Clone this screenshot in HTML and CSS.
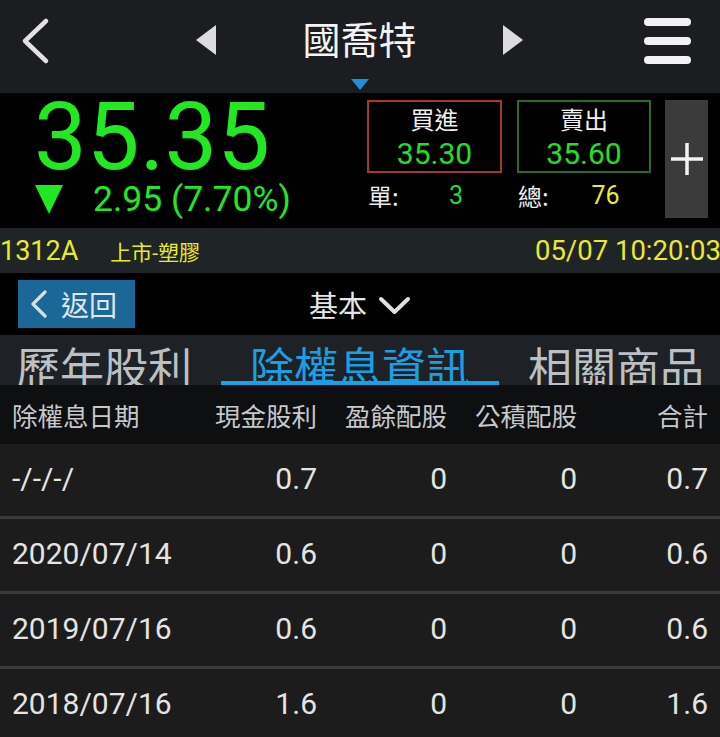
FILE: index.html
```html
<!DOCTYPE html>
<html lang="zh-Hant">
<head>
<meta charset="utf-8">
<title>國喬特</title>
<link rel="stylesheet" href="styles.css">
</head>
<body>
<div class="app">
  <header class="topbar">
    <div class="topnav">
      <div class="nav-left">
        <svg class="back-icon" width="32" height="48" viewBox="0 0 32 48"><polyline points="26,4 5,24 26,44" fill="none" stroke="#e2e2e2" stroke-width="4.5" stroke-linecap="round" stroke-linejoin="round"/></svg>
      </div>
      <div class="nav-mid">
        <svg class="tri" width="20" height="30" viewBox="0 0 20 30"><polygon points="20,0 0,15 20,30" fill="#dcdcdc"/></svg>
        <div class="title">國喬特</div>
        <svg class="tri" width="20" height="30" viewBox="0 0 20 30"><polygon points="0,0 20,15 0,30" fill="#dcdcdc"/></svg>
      </div>
      <div class="nav-right">
        <div class="burger"><span></span><span></span><span></span></div>
      </div>
    </div>
    <div class="caret-row">
      <svg width="18" height="11" viewBox="0 0 18 11"><polygon points="0,0 18,0 9,11" fill="#1e90d8"/></svg>
    </div>
  </header>

  <section class="quote">
    <div class="price-col">
      <div class="price">35.35</div>
      <div class="change">
        <svg class="down" width="28" height="29" viewBox="0 0 28 29"><polygon points="0,0 28,0 14,29" fill="#22e822"/></svg>
        <span class="change-text">2.95 (7.70%)</span>
      </div>
    </div>
    <div class="trade">
      <div class="box buy">
        <div class="box-label">買進</div>
        <div class="box-value">35.30</div>
      </div>
      <div class="box sell">
        <div class="box-label">賣出</div>
        <div class="box-value">35.60</div>
      </div>
      <div class="stat">
        <span class="stat-label">單:</span>
        <span class="stat-value green">3</span>
      </div>
      <div class="stat">
        <span class="stat-label">總:</span>
        <span class="stat-value yellow">76</span>
      </div>
    </div>
    <div class="plus">
      <svg width="32" height="32" viewBox="0 0 32 32"><path d="M16 0V32M0 16H32" stroke="#f2f2f2" stroke-width="3.5"/></svg>
    </div>
  </section>

  <div class="infobar">
    <span class="code">1312A</span>
    <span class="market">上市-塑膠</span>
    <span class="time">05/07 10:20:03</span>
  </div>

  <div class="subnav">
    <div class="sub-left">
      <div class="back-btn">
        <svg width="17" height="28" viewBox="0 0 17 28"><polyline points="15,2 3,14 15,26" fill="none" stroke="#d8dde2" stroke-width="3.2" stroke-linecap="round" stroke-linejoin="round"/></svg>
        <span>返回</span>
      </div>
    </div>
    <div class="dropdown">
      <span>基本</span>
      <svg width="33" height="19" viewBox="0 0 33 19"><polyline points="3,3 16.5,16 30,3" fill="none" stroke="#e0e0e0" stroke-width="4" stroke-linecap="round" stroke-linejoin="round"/></svg>
    </div>
    <div class="sub-right"></div>
  </div>

  <nav class="tabs">
    <div class="tab">歷年股利</div>
    <div class="tab active">除權息資訊</div>
    <div class="tab">相關商品</div>
  </nav>

  <div class="table">
    <div class="row head">
      <div class="c1">除權息日期</div>
      <div>現金股利</div>
      <div>盈餘配股</div>
      <div>公積配股</div>
      <div>合計</div>
    </div>
    <div class="row data">
      <div class="c1">-/-/-/</div>
      <div>0.7</div>
      <div>0</div>
      <div>0</div>
      <div>0.7</div>
    </div>
    <div class="row data">
      <div class="c1">2020/07/14</div>
      <div>0.6</div>
      <div>0</div>
      <div>0</div>
      <div>0.6</div>
    </div>
    <div class="row data">
      <div class="c1">2019/07/16</div>
      <div>0.6</div>
      <div>0</div>
      <div>0</div>
      <div>0.6</div>
    </div>
    <div class="row data">
      <div class="c1">2018/07/16</div>
      <div>1.6</div>
      <div>0</div>
      <div>0</div>
      <div>1.6</div>
    </div>
  </div>
</div>
</body>
</html>
```

FILE: styles.css
```css
* { box-sizing: border-box; }
html, body {
  margin: 0;
  padding: 0;
  background: #000;
}
body {
  font-family: Roboto, "Noto Sans CJK TC", sans-serif;
  color: #e6e6e6;
}
.app {
  width: 720px;
  height: 737px;
  overflow: hidden;
  background: #000;
}

/* top bar */
.topbar {
  height: 93px;
  background: #1b1d20;
  display: flex;
  flex-direction: column;
}
.topnav {
  height: 79px;
  padding: 0 21px 0 20px;
  display: grid;
  grid-template-columns: 1fr auto 1fr;
  align-items: center;
}
.nav-left { display: flex; align-items: center; }
.back-icon { display: block; margin-top: 2px; }
.nav-mid {
  display: flex;
  align-items: center;
  gap: 86px;
}
.tri { display: block; }
.title {
  font-family: "Noto Sans CJK TC", sans-serif;
  font-size: 38px;
  line-height: 38px;
  color: #f4f4f4;
  margin-top: -3px;
}
.nav-right { display: flex; justify-content: flex-end; }
.burger {
  width: 47px;
  margin-right: 8px;
  display: flex;
  flex-direction: column;
  gap: 11px;
  margin-top: 2px;
}
.burger span {
  display: block;
  height: 8px;
  border-radius: 4px;
  background: #f2f2f2;
}
.caret-row {
  height: 14px;
  display: flex;
  justify-content: center;
}
.caret-row svg { display: block; }

/* quote */
.quote {
  height: 135px;
  display: flex;
  padding: 7px 12px 0 0;
  background: #000;
}
.price-col {
  flex: 1;
  padding-left: 34px;
}
.price {
  font-size: 94px;
  line-height: 80px;
  margin-top: -3px;
  color: #22e822;
}
.change {
  display: flex;
  align-items: center;
  margin-top: 2px;
  height: 40px;
}
.down { display: block; margin-left: 1px; }
.change-text {
  margin-left: 30px;
  font-size: 35.5px;
  line-height: 40px;
  color: #22e822;
}
.trade {
  display: grid;
  grid-template-columns: 135px 134px;
  column-gap: 15px;
  align-content: start;
}
.box {
  height: 73px;
  border: 2px solid;
  text-align: center;
  padding-top: 2px;
}
.buy { border-color: #a3382e; }
.sell { border-color: #2d6a2a; }
.box-label {
  font-family: "Noto Sans CJK TC", sans-serif;
  font-size: 24px;
  line-height: 30px;
  color: #f0f0f0;
}
.box-value {
  font-size: 30px;
  line-height: 34px;
  margin-top: 3px;
  color: #22e022;
}
.stat {
  display: flex;
  margin-top: 8px;
  line-height: 30px;
}
.stat-label {
  width: 50px;
  padding-left: 1px;
  font-family: "Noto Sans CJK TC", sans-serif;
  font-size: 24px;
  color: #ececec;
}
.stat-value {
  flex: 1;
  text-align: center;
  padding-right: 7px;
  font-size: 25px;
}
.green { color: #22dd22; }
.yellow { color: #eaea2a; }
.plus {
  width: 43px;
  height: 118px;
  margin-left: 14px;
  background: #3b3b3b;
  display: flex;
  align-items: center;
  justify-content: center;
}
.plus svg { display: block; }

/* info bar */
.infobar {
  height: 45px;
  background: #1f2427;
  display: flex;
  align-items: center;
  color: #eaea2a;
}
.code {
  font-size: 27px;
}
.market {
  margin-left: 32px;
  font-size: 21px;
}
.time {
  margin-left: auto;
  font-size: 27.5px;
  margin-right: -1px;
}

/* sub nav */
.subnav {
  height: 62px;
  padding: 7px 0;
  display: grid;
  grid-template-columns: 1fr auto 1fr;
  align-items: center;
  background: #000;
}
.back-btn {
  margin-left: 18px;
  width: 117px;
  height: 48px;
  background: #1b6898;
  display: flex;
  align-items: center;
  padding-left: 12px;
  gap: 14px;
  color: #e2e6ea;
  font-family: "Noto Sans CJK TC", sans-serif;
  font-size: 28px;
  line-height: 1;
}
.back-btn svg { display: block; }
.dropdown {
  display: flex;
  align-items: center;
  gap: 11px;
  font-family: "Noto Sans CJK TC", sans-serif;
  font-size: 29px;
  line-height: 1;
  color: #e6e6e6;
}
.dropdown svg { display: block; margin-top: 2px; }

/* tabs */
.tabs {
  height: 50px;
  background: #1e2226;
  display: flex;
  justify-content: center;
  overflow: hidden;
}
.tab {
  flex-shrink: 0;
  height: 50px;
  padding: 9px 29px 0;
  font-family: "Noto Sans CJK TC", sans-serif;
  font-size: 44px;
  line-height: 44px;
  color: #bcc0c4;
  white-space: nowrap;
}
.tab.active {
  color: #1c9fe2;
  box-shadow: inset 0 -4px 0 #1ba2e6;
}

/* table */
.row {
  display: grid;
  grid-template-columns: 1fr 130px 130px 130px 131px;
  align-items: center;
  padding: 0 12px;
  text-align: right;
}
.row .c1 { text-align: left; }
.head {
  height: 59px;
  background: #0e0f11;
  font-family: "Noto Sans CJK TC", sans-serif;
  font-size: 25.5px;
  color: #c6c8ca;
}
.data {
  height: 72px;
  padding-bottom: 4px;
  background: #1c1c1c;
  font-size: 30px;
  color: #e4e4e4;
}
.data + .data {
  height: 75px;
  border-top: 3px solid #3b3b3b;
}
```
